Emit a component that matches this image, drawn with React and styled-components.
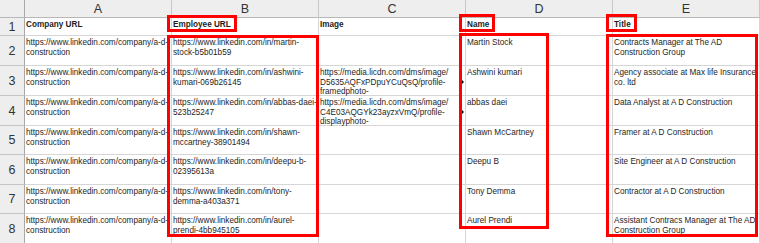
import React from "react";
import styled, { createGlobalStyle } from "styled-components";

const Global = createGlobalStyle`
  html, body { margin: 0; padding: 0; background: #ffffff; }
  body { font-family: "Liberation Sans", Arial, sans-serif; overflow: hidden; }
`;

const Sheet = styled.div`
  position: relative;
  width: 760px;
  height: 243px;
  overflow: hidden;
`;

const Grid = styled.div`
  display: grid;
  grid-template-columns: 25px repeat(5, 147px);
  grid-template-rows: ${(p) => p.$rows};
`;

const Corner = styled.div`
  background: #eeeeee;
  border-right: 1px solid #a8a8a8;
  border-bottom: 1px solid #b8b8b8;
  box-sizing: border-box;
`;

const ColHead = styled.div`
  background: #eeeeee;
  border-right: 1px solid #c8c8c8;
  border-bottom: 1px solid #b8b8b8;
  box-sizing: border-box;
  display: flex;
  align-items: center;
  justify-content: center;
  font-family: "Liberation Sans", Arial, sans-serif;
  font-size: 12.5px;
  color: #333333;
  padding-top: 1px;
`;

const RowHead = styled.div`
  background: #eeeeee;
  border-right: 1px solid #a8a8a8;
  border-bottom: 1px solid #c4c4c4;
  box-sizing: border-box;
  display: flex;
  align-items: center;
  justify-content: center;
  font-family: "Liberation Sans", Arial, sans-serif;
  font-size: 12.5px;
  color: #333333;
`;

const Cell = styled.div`
  position: relative;
  border-right: 1px solid #d6d6d6;
  border-bottom: 1px solid #d6d6d6;
  box-sizing: border-box;
  padding: 2px 0 0 1px;
  font-size: 8.2px;
  line-height: 9.7px;
  font-weight: ${(p) => (p.$bold ? 700 : 400)};
  color: #1e1e1e;
  overflow: visible;
  z-index: ${(p) => (p.$over ? 1 : 0)};

  ${(p) =>
    p.$clipped &&
    `
    &::after {
      content: "";
      position: absolute;
      right: 1px;
      top: 14px;
      width: 0;
      height: 0;
      border-top: 2px solid transparent;
      border-bottom: 2px solid transparent;
      border-left: 2px solid #000000;
    }
  `}
`;

const Line = styled.div`
  white-space: nowrap;
`;

const RedBox = styled.div`
  position: absolute;
  left: ${(p) => p.$x}px;
  top: ${(p) => p.$y}px;
  width: ${(p) => p.$w}px;
  height: ${(p) => p.$h}px;
  border: 3px solid #ff0000;
  box-sizing: border-box;
  pointer-events: none;
  z-index: 5;
`;

const cols = ["A", "B", "C", "D", "E"];

const rows = [
  {
    n: 1,
    h: 18,
    bold: true,
    cells: [["Company URL"], ["Employee URL"], ["Image"], ["Name"], ["Title"]],
  },
  {
    n: 2,
    h: 30,
    cells: [
      ["https://www.linkedin.com/company/a-d-", "construction"],
      ["https://www.linkedin.com/in/martin-", "stock-b5b01b59"],
      [],
      ["Martin Stock"],
      ["Contracts Manager at The AD", "Construction Group"],
    ],
  },
  {
    n: 3,
    h: 30,
    clipC: true,
    cells: [
      ["https://www.linkedin.com/company/a-d-", "construction"],
      ["https://www.linkedin.com/in/ashwini-", "kumari-069b26145"],
      ["https://media.licdn.com/dms/image/", "D5635AQFxPDpuYCuQsQ/profile-", "framedphoto-"],
      ["Ashwini kumari"],
      ["Agency associate at Max life Insurance", "co. ltd"],
    ],
  },
  {
    n: 4,
    h: 30,
    clipC: true,
    cells: [
      ["https://www.linkedin.com/company/a-d-", "construction"],
      ["https://www.linkedin.com/in/abbas-daei-", "523b25247"],
      ["https://media.licdn.com/dms/image/", "C4E03AQGYk23ayzxVmQ/profile-", "displayphoto-"],
      ["abbas daei"],
      ["Data Analyst at A D Construction"],
    ],
  },
  {
    n: 5,
    h: 29,
    cells: [
      ["https://www.linkedin.com/company/a-d-", "construction"],
      ["https://www.linkedin.com/in/shawn-", "mccartney-38901494"],
      [],
      ["Shawn McCartney"],
      ["Framer at A D Construction"],
    ],
  },
  {
    n: 6,
    h: 30,
    cells: [
      ["https://www.linkedin.com/company/a-d-", "construction"],
      ["https://www.linkedin.com/in/deepu-b-", "02395613a"],
      [],
      ["Deepu B"],
      ["Site Engineer at A D Construction"],
    ],
  },
  {
    n: 7,
    h: 29,
    cells: [
      ["https://www.linkedin.com/company/a-d-", "construction"],
      ["https://www.linkedin.com/in/tony-", "demma-a403a371"],
      [],
      ["Tony Demma"],
      ["Contractor at A D Construction"],
    ],
  },
  {
    n: 8,
    h: 30,
    cells: [
      ["https://www.linkedin.com/company/a-d-", "construction"],
      ["https://www.linkedin.com/in/aurel-", "prendi-4bb945105"],
      [],
      ["Aurel Prendi"],
      ["Assistant Contracs Manager at The AD", "Construction Group"],
    ],
  },
];

const boxes = [
  { x: 167, y: 15, w: 70, h: 17 },
  { x: 167, y: 35, w: 152, h: 202 },
  { x: 459, y: 14, w: 36, h: 18 },
  { x: 459, y: 33, w: 90, h: 196 },
  { x: 606, y: 14, w: 31, h: 18 },
  { x: 606, y: 34, w: 152, h: 203 },
];

export default function App() {
  const template = ["18px", ...rows.map((r) => `${r.h}px`)].join(" ");
  return (
    <>
      <Global />
      <Sheet>
        <Grid $rows={template}>
          <Corner />
          {cols.map((c) => (
            <ColHead key={c}>{c}</ColHead>
          ))}
          {rows.map((r) => (
            <React.Fragment key={r.n}>
              <RowHead>{r.n}</RowHead>
              {r.cells.map((lines, i) => (
                <Cell
                  key={i}
                  $bold={r.bold}
                  $over={i === 2 && r.clipC}
                  $clipped={i === 2 && r.clipC}
                >
                  {lines.map((l, j) => (
                    <Line key={j}>{l}</Line>
                  ))}
                </Cell>
              ))}
            </React.Fragment>
          ))}
        </Grid>
        {boxes.map((b, i) => (
          <RedBox key={i} $x={b.x} $y={b.y} $w={b.w} $h={b.h} />
        ))}
      </Sheet>
    </>
  );
}
